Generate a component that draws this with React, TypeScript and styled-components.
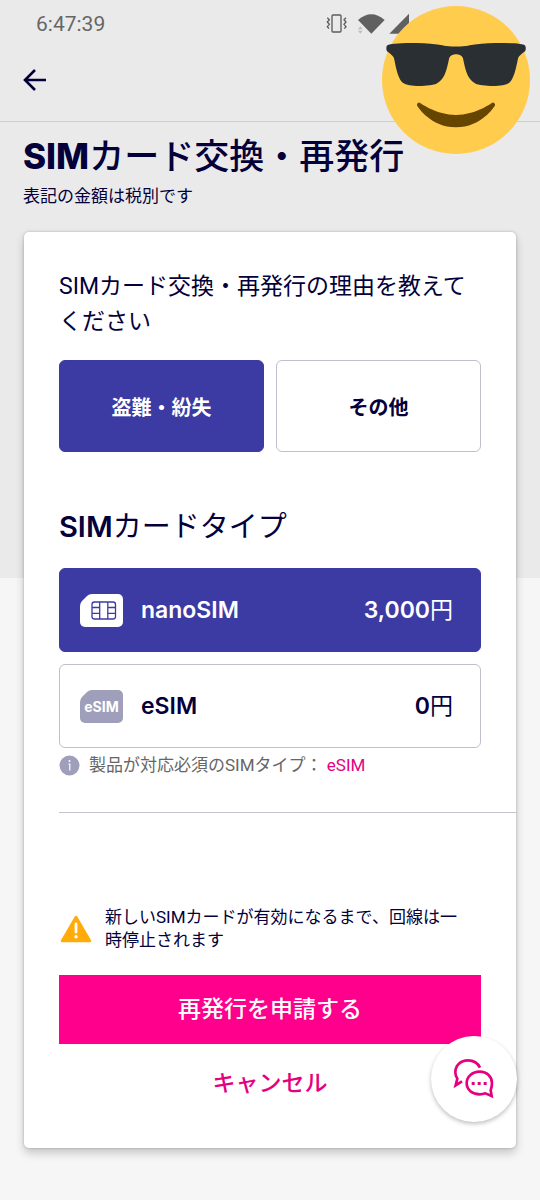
import React, { useState } from "react";
import styled, { createGlobalStyle } from "styled-components";

const navy = "#03003a";
const indigo = "#3c3aa3";
const pink = "#ff008c";
const magenta = "#e4007f";
const lavender = "#a09fbb";
const outline = "#bfbfce";

const bodyFont = `Roboto, "Noto Sans CJK JP", sans-serif`;
const displayFont = `Inter, "Noto Sans CJK JP", sans-serif`;

const GlobalStyle = createGlobalStyle`
  *, *::before, *::after { box-sizing: border-box; }
  body { margin: 0; background: #f6f6f6; color: ${navy}; font-family: ${bodyFont}; }
  button { font: inherit; border: 0; padding: 0; background: none; cursor: pointer; }
  h1, h2, p { margin: 0; }
  svg { display: block; flex: none; }
`;

const Page = styled.div`
  min-height: 100vh;
  padding-bottom: 51px;
  background: linear-gradient(#eaeaea 578px, #f6f6f6 578px);
`;

const StatusBar = styled.div`
  display: flex;
  align-items: center;
  justify-content: space-between;
  height: 47px;
  padding: 0 130px 0 36px;
  color: #666;
  font-size: 21px;
`;

const AppBar = styled.header`
  display: flex;
  align-items: center;
  height: 75px;
  padding: 0 20px 8px;
  border-bottom: 1px solid #cfcfcf;
`;

const BackButton = styled.button`
  color: ${navy};
`;

const Sticker = styled.svg`
  position: absolute;
  top: 6px;
  right: 10px;
  width: 148px;
  height: 148px;
`;

const Intro = styled.div`
  padding: 12px 23px 24px;
`;

const PageTitle = styled.h1`
  font-family: ${displayFont};
  font-size: 35px;
  font-weight: 500;
  line-height: 44px;
`;

const Latin = styled.span<{ $weight: number }>`
  font-weight: ${(p) => p.$weight};
`;

const TaxNote = styled.p`
  padding-top: 6px;
  font-size: 17px;
  line-height: 24px;
`;

const Card = styled.form`
  margin: 0 24px;
  padding: 37px 35px 30px;
  background: #fff;
  border-radius: 5px;
  box-shadow: 0 0 2px 1px rgba(0, 0, 30, 0.1), 0 5px 10px rgba(0, 0, 0, 0.2);
`;

const Group = styled.fieldset`
  display: block;
  min-width: 0;
  margin: 0;
  padding: 0;
  border: 0;
`;

const Question = styled.legend`
  padding: 0 0 21px;
  font-size: 23px;
  line-height: 35px;
`;

const SectionTitle = styled.legend`
  padding: 55px 0 21px;
  font-family: ${displayFont};
  font-size: 29px;
  font-weight: 400;
  line-height: 40px;
`;

const ReasonGrid = styled.div`
  display: grid;
  grid-template-columns: 1fr 1fr;
  gap: 12px;
`;

const SimList = styled.div`
  display: grid;
  gap: 12px;
`;

const Choice = styled.label<{ $selected: boolean }>`
  display: flex;
  align-items: center;
  position: relative;
  border: 1px solid ${(p) => (p.$selected ? indigo : outline)};
  border-radius: 6px;
  background: ${(p) => (p.$selected ? indigo : "#fff")};
  color: ${(p) => (p.$selected ? "#fff" : navy)};
  cursor: pointer;
`;

const ReasonChoice = styled(Choice)`
  justify-content: center;
  height: 92px;
  font-size: 20px;
  font-weight: 700;
`;

const SimChoice = styled(Choice)`
  gap: 18px;
  height: 84px;
  padding: 0 27px 0 20px;
  font-family: ${displayFont};
  font-size: 23px;
  line-height: 35px;
`;

const HiddenRadio = styled.input`
  position: absolute;
  inset: 0;
  width: 100%;
  height: 100%;
  margin: 0;
  opacity: 0;
  cursor: pointer;
`;

const Price = styled.span`
  margin-left: auto;
`;

const InfoRow = styled.p`
  display: flex;
  align-items: center;
  gap: 9px;
  padding: 5px 0 34px;
  color: #666;
  font-size: 17px;
  line-height: 25px;
`;

const InfoLink = styled.a`
  color: ${magenta};
  text-decoration: none;
`;

const Divider = styled.hr`
  height: 1px;
  margin: 0 -35px 0 0;
  border: 0;
  background: #c4c4cc;
`;

const Warning = styled.div`
  display: flex;
  align-items: center;
  gap: 12px;
  padding: 93px 12px 23px 0;
  font-size: 17px;
  line-height: 23px;
`;

const PrimaryButton = styled.button`
  && {
    display: block;
    width: 100%;
    height: 69px;
    padding-bottom: 5px;
    background: ${pink};
    color: #fff;
    font-size: 23px;
    font-weight: 500;
  }
`;

const CancelButton = styled.button`
  && {
    display: block;
    width: 100%;
    height: 74px;
    color: ${magenta};
    font-size: 23px;
    font-weight: 500;
  }
`;

const ChatButton = styled.button`
  && {
    position: fixed;
    right: 23px;
    bottom: 78px;
    display: grid;
    place-items: center;
    width: 86px;
    height: 86px;
    border-radius: 50%;
    background: #fff;
    box-shadow: 0 2px 4px rgba(0, 0, 0, 0.25);
  }
`;

const StatusIcons = () => (
  <svg width="84" height="22" viewBox="78 38 252 66" fill="none" aria-hidden="true">
    <rect x="96" y="44" width="27" height="51" rx="3" stroke="#5c5c5c" strokeWidth="4" />
    <path
      d="M82 52l6 6-6 7 6 7-6 7 5 6M138 52l-6 6 6 7-6 7 6 7-5 6"
      stroke="#5c5c5c"
      strokeWidth="4"
    />
    <path d="M174 59Q214 24 254 59L214 100Z" fill="#606060" />
    <path d="M174 87l7-9 7 9zM174 91l7 9 7-9z" fill="#bdbdbd" />
    <path d="M268 100L327 40V100Z" fill="#606060" />
  </svg>
);

const BackIcon = () => (
  <svg width="28" height="28" viewBox="0 0 28 28" fill="none" stroke="currentColor" strokeWidth="2.600" aria-hidden="true">
    <path d="M26 14H5M15 4L5 14l10 10" />
  </svg>
);

const CoolFace = () => (
  <Sticker viewBox="0 0 36 36" aria-hidden="true">
    <circle cx="18" cy="18" r="18" fill="#ffcc4d" />
    <path
      fill="#292f33"
      d="M1.24 11.018c.24.239 1.438.957 1.677 1.675.24.717.72 4.784 2.158 5.981 1.483 1.232 7.077.774 8.148.24 2.397-1.195 2.691-4.531 3.115-6.221.239-.957 1.677-.957 1.677-.957s1.438 0 1.678.956c.424 1.691.72 5.027 3.115 6.221 1.072.535 6.666.994 8.151-.238 1.436-1.197 1.915-5.264 2.155-5.982.238-.717 1.438-1.435 1.677-1.674.241-.239.241-1.196 0-1.436-.479-.478-6.134-.904-12.223-.239-1.215.133-1.677.478-4.554.478-2.875 0-3.339-.346-4.553-.478-6.085-.666-11.741-.24-12.221.238-.239.239-.239 1.197 0 1.436z"
    />
    <path
      fill="#664500"
      d="M27.335 23.629a.501.501 0 0 0-.635-.029c-.039.029-3.922 2.9-8.7 2.9-4.766 0-8.662-2.871-8.7-2.9a.5.5 0 0 0-.729.657C8.7 24.472 11.788 29.5 18 29.5s9.301-5.028 9.429-5.243a.499.499 0 0 0-.094-.628z"
    />
  </Sticker>
);

const simOutline = "M12 0H38a5 5 0 0 1 5 5V28a5 5 0 0 1-5 5H5a5 5 0 0 1-5-5V12Q0 9 2 7L7 2Q9 0 12 0Z";

const NanoSimIcon = () => (
  <svg width="43" height="33" viewBox="0 0 43 33" aria-hidden="true">
    <path d={simOutline} fill="#fff" />
    <g fill="none" stroke={indigo} strokeWidth="1.300">
      <rect x="12" y="8" width="23.500" height="17" rx="2.500" />
      <path d="M19.700 8V25M27.800 8V25M12 13.500h7.700M12 19.300h7.700M27.800 13.500h7.700M27.800 19.300h7.700" />
    </g>
  </svg>
);

const ESimIcon = () => (
  <svg width="43" height="33" viewBox="0 0 43 33" aria-hidden="true">
    <path d={simOutline} fill={lavender} />
    <text x="21.500" y="21.500" textAnchor="middle" fill="#fff" fontFamily="Inter, sans-serif" fontSize="14" fontWeight="700">
      eSIM
    </text>
  </svg>
);

const InfoIcon = () => (
  <svg width="21" height="21" viewBox="0 0 21 21" aria-hidden="true">
    <circle cx="10.500" cy="10.500" r="10" fill={lavender} />
    <circle cx="10.500" cy="6" r="1" fill="#fff" />
    <path d="M9.500 9h1.300v6.500" fill="none" stroke="#fff" strokeWidth="1.200" />
  </svg>
);

const WarningIcon = () => (
  <svg width="34" height="30" viewBox="0 0 34 30" aria-hidden="true">
    <path d="M17 3L31 27H3Z" fill="#ffab0a" stroke="#ffab0a" strokeWidth="2.500" strokeLinejoin="round" />
    <path d="M17 10v8" stroke="#fff" strokeWidth="2.800" strokeLinecap="round" />
    <circle cx="17" cy="22.700" r="1.700" fill="#fff" />
  </svg>
);

const ChatIcon = () => (
  <svg width="42" height="42" viewBox="488 504 126 126" fill="none" stroke={magenta} strokeWidth="8" aria-hidden="true">
    <path d="M569 533C562 518 549 511 533 511C511 511 495 526 495 547C495 554 497 561 501 566L496 586L515 574" />
    <path d="M601 601L604 618L585 610C580 612 574 613 568 613C546 613 529 599 529 579C529 560 546 545 568 545C590 545 605 560 605 579C605 587 603 595 601 601Z" />
    <g fill={magenta} stroke="none">
      <rect x="544" y="576" width="9" height="9" />
      <rect x="562" y="576" width="9" height="9" />
      <rect x="580" y="576" width="9" height="9" />
    </g>
  </svg>
);

const reasons = [
  { id: "lost", label: "盗難・紛失" },
  { id: "other", label: "その他" },
];

const simTypes = [
  { id: "nano", label: "nanoSIM", price: "3,000", Icon: NanoSimIcon },
  { id: "esim", label: "eSIM", price: "0", Icon: ESimIcon },
];

export default function App() {
  const [reason, setReason] = useState("lost");
  const [sim, setSim] = useState("nano");

  return (
    <Page>
      <GlobalStyle />
      <StatusBar>
        <span>6:47:39</span>
        <StatusIcons />
      </StatusBar>
      <AppBar>
        <BackButton type="button" aria-label="戻る">
          <BackIcon />
        </BackButton>
      </AppBar>
      <CoolFace />
      <Intro>
        <PageTitle>
          <Latin $weight={800}>SIM</Latin>カード交換・再発行
        </PageTitle>
        <TaxNote>表記の金額は税別です</TaxNote>
      </Intro>

      <Card onSubmit={(e) => e.preventDefault()}>
        <Group>
          <Question>SIMカード交換・再発行の理由を教えてください</Question>
          <ReasonGrid>
            {reasons.map((r) => (
              <ReasonChoice key={r.id} $selected={reason === r.id}>
                <HiddenRadio type="radio" name="reason" checked={reason === r.id} onChange={() => setReason(r.id)} />
                {r.label}
              </ReasonChoice>
            ))}
          </ReasonGrid>
        </Group>

        <Group>
          <SectionTitle>
            <Latin $weight={600}>SIM</Latin>カードタイプ
          </SectionTitle>
          <SimList>
            {simTypes.map(({ id, label, price, Icon }) => (
              <SimChoice key={id} $selected={sim === id}>
                <HiddenRadio type="radio" name="sim" checked={sim === id} onChange={() => setSim(id)} />
                <Icon />
                <Latin $weight={600}>{label}</Latin>
                <Price>
                  <Latin $weight={600}>{price}</Latin>円
                </Price>
              </SimChoice>
            ))}
          </SimList>
        </Group>

        <InfoRow>
          <InfoIcon />
          <span>
            製品が対応必須のSIMタイプ： <InfoLink href="#esim">eSIM</InfoLink>
          </span>
        </InfoRow>
        <Divider />
        <Warning>
          <WarningIcon />
          <p>新しいSIMカードが有効になるまで、回線は一時停止されます</p>
        </Warning>
        <PrimaryButton type="submit">再発行を申請する</PrimaryButton>
        <CancelButton type="button">キャンセル</CancelButton>
      </Card>

      <ChatButton type="button" aria-label="チャット">
        <ChatIcon />
      </ChatButton>
    </Page>
  );
}
